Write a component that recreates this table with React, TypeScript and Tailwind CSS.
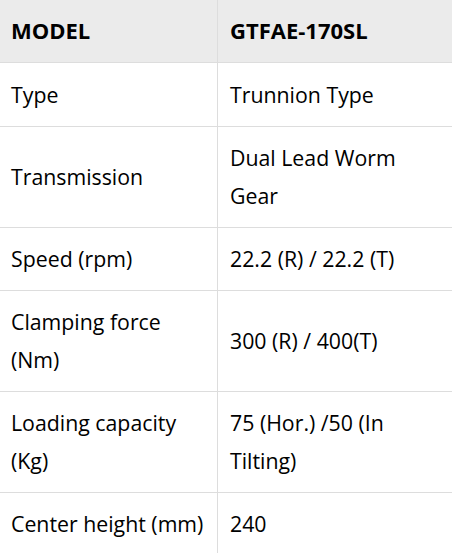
import React from "react";

const rows: [string, string][] = [
  ["Type", "Trunnion Type"],
  ["Transmission", "Dual Lead Worm Gear"],
  ["Speed (rpm)", "22.2 (R) / 22.2 (T)"],
  ["Clamping force (Nm)", "300 (R) / 400(T)"],
  ["Loading capacity (Kg)", "75 (Hor.) /50 (In Tilting)"],
  ["Center height (mm)", "240"],
];

export default function App() {
  return (
    <div
      className="w-[452px] h-[553px] overflow-hidden bg-white text-black text-[21.3px] leading-[37.6px]"
      style={{ fontFamily: '"Open Sans", "Noto Sans", sans-serif' }}
    >
      <div className="grid grid-cols-[218px_1fr]">
        <div className="bg-[#ebebeb] border-r border-b border-[#dddddd] pl-[11px] pr-2 py-[12.4px] font-bold text-[22px]">
          MODEL
        </div>
        <div className="bg-[#ebebeb] border-b border-[#dddddd] pl-3 pr-2 py-[12.4px] font-bold text-[22px]">
          GTFAE-170SL
        </div>
        {rows.map(([k, v]) => (
          <React.Fragment key={k}>
            <div className="flex items-center border-r border-b border-[#dddddd] pl-[11px] pr-2 py-[12.4px]">
              {k}
            </div>
            <div className="flex items-center border-b border-[#dddddd] pl-3 pr-3 py-[12.4px]">
              {v}
            </div>
          </React.Fragment>
        ))}
      </div>
    </div>
  );
}
